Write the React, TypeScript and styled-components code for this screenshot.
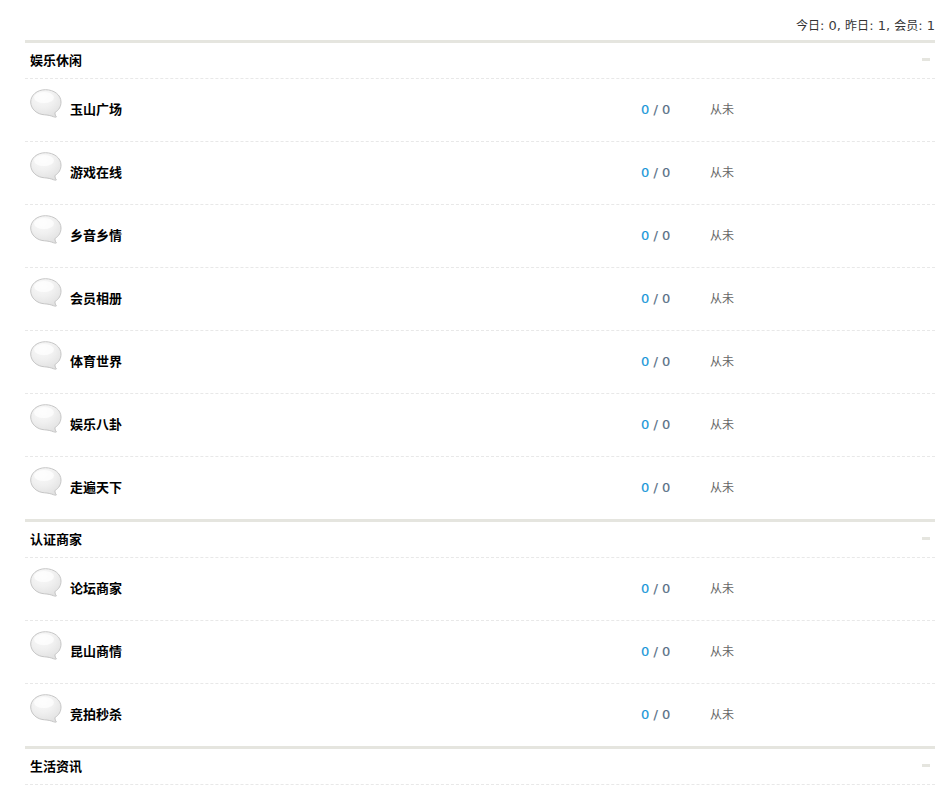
import React from "react";
import styled, { createGlobalStyle } from "styled-components";

const Global = createGlobalStyle`
  html, body { margin: 0; padding: 0; background: #fff; }
  body { font-family: "Liberation Sans", "Noto Sans CJK SC", sans-serif; color: #444; font-size: 12px; }
`;
const Page = styled.div`
  height: 790px;
  overflow: hidden;
  padding: 0 14px 0 25px;
`;
const Stats = styled.div`
  height: 40px;
  box-sizing: border-box;
  padding-top: 17px;
  line-height: 16px;
  text-align: right;
  font-family: "DejaVu Sans", sans-serif;
  font-size: 13px;
  color: #3c3c3c;
  white-space: pre;
`;
const StatLabel = styled.span`
  font: 12px/16px "Noto Sans CJK SC", sans-serif;
  color: #333;
`;
const Section = styled.section`
  border-top: 3px solid #e5e5df;
`;
const Header = styled.div`
  height: 36px;
  box-sizing: border-box;
  padding: 0 5px 2px;
  display: flex;
  align-items: center;
  justify-content: space-between;
  border-bottom: 1px dashed #e8e8e8;
`;
const SectionTitle = styled.h2`
  margin: 0;
  font: 700 13px/16px "Noto Sans CJK SC", sans-serif;
  color: #000;
`;
const Collapse = styled.span`
  width: 8px;
  height: 3px;
  background: #e5e5df;
`;
const Row = styled.div`
  height: 63px;
  box-sizing: border-box;
  display: grid;
  grid-template-columns: 40px 571px 69px 1fr;
  padding: 0 0 2px 5px;
  border-bottom: 1px dashed #e8e8e8;
  align-items: center;
  &:last-child {
    border-bottom: 0;
    height: 62px;
  }
`;
const BubbleSvg = styled.svg`
  display: block;
  width: 32px;
  height: 30px;
  margin-top: -11px;
`;
const ForumName = styled.a`
  font: 700 13px/16px "Noto Sans CJK SC", sans-serif;
  color: #000;
`;
const Counts = styled.div`
  padding-top: 2px;
  font: 13px/16px "DejaVu Sans", sans-serif;
  color: #566e84;
  white-space: pre;
  -webkit-text-stroke: 0.15px currentColor;
`;
const Threads = styled.span`
  color: #1596d8;
`;
const LastPost = styled.div`
  font: 12px/16px "Noto Sans CJK SC", sans-serif;
  color: #666;
`;

const Bubble = ({ id }: { id: string }) => (
  <BubbleSvg viewBox="0 0 32 30">
    <defs>
      <radialGradient id={id} cx="0.4" cy="0.25" r="0.8">
        <stop offset="0" stopColor="#fafafa" />
        <stop offset="0.5" stopColor="#f0f0f0" />
        <stop offset="1" stopColor="#e0e0e0" />
      </radialGradient>
    </defs>
    <path
      d="M15.500.7C7 .7 .7 6.200 .7 13c0 7 6.300 12.500 14 12.800 3 .2 6 .8 9 2 1.500.5 3 .5 2.600-.1-.8-1-1.300-2-1.400-4.100C29 21 31 17.500 31 13 31 6 24 .7 15.500.7Z"
      fill={`url(#${id})`}
      stroke="#c6c6c6"
      strokeWidth="1"
    />
    <ellipse cx="14" cy="8.500" rx="10" ry="5.500" fill="#ffffff" opacity="0.7" />
  </BubbleSvg>
);

const data: { title: string; forums: string[] }[] = [
  { title: "娱乐休闲", forums: ["玉山广场", "游戏在线", "乡音乡情", "会员相册", "体育世界", "娱乐八卦", "走遍天下"] },
  { title: "认证商家", forums: ["论坛商家", "昆山商情", "竞拍秒杀"] },
  { title: "生活资讯", forums: [] },
];

export default function App() {
  return (
    <Page>
      <Global />
      <Stats>
        <StatLabel>今日</StatLabel>: 0, <StatLabel>昨日</StatLabel>: 1, <StatLabel>会员</StatLabel>: 1
      </Stats>
      {data.map((s) => (
        <Section key={s.title}>
          <Header>
            <SectionTitle>{s.title}</SectionTitle>
            <Collapse />
          </Header>
          {s.forums.map((f) => (
            <Row key={f}>
              <Bubble id={`g-${f}`} />
              <ForumName>{f}</ForumName>
              <Counts>
                <Threads>0</Threads> / 0
              </Counts>
              <LastPost>从未</LastPost>
            </Row>
          ))}
        </Section>
      ))}
    </Page>
  );
}
